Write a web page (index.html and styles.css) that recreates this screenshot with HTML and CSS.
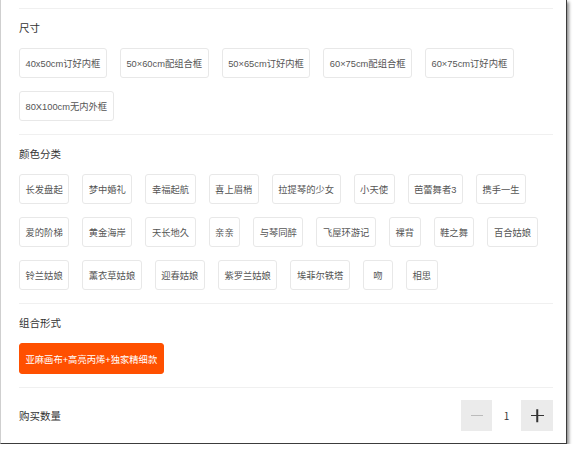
FILE: index.html
```html
<!DOCTYPE html>
<html lang="zh-CN">
<head>
  <meta charset="UTF-8" />
  <meta name="viewport" content="width=device-width, initial-scale=1" />
  <title>商品选项</title>
  <link rel="stylesheet" href="styles.css">
</head>
<body>
  <div class="window">
    <div class="sku-section">
      <div class="sku-title">尺寸</div>
      <div class="sku-options">
        <span class="sku-item">40x50cm订好内框</span>
        <span class="sku-item">50×60cm配组合框</span>
        <span class="sku-item">50×65cm订好内框</span>
        <span class="sku-item">60×75cm配组合框</span>
        <span class="sku-item">60×75cm订好内框</span>
        <span class="sku-item">80X100cm无内外框</span>
      </div>
    </div>

    <div class="sku-section">
      <div class="sku-title">颜色分类</div>
      <div class="sku-options">
        <span class="sku-item">长发盘起</span>
        <span class="sku-item">梦中婚礼</span>
        <span class="sku-item">幸福起航</span>
        <span class="sku-item">喜上眉梢</span>
        <span class="sku-item">拉提琴的少女</span>
        <span class="sku-item">小天使</span>
        <span class="sku-item">芭蕾舞者3</span>
        <span class="sku-item">携手一生</span>
        <span class="sku-item">爱的阶梯</span>
        <span class="sku-item">黄金海岸</span>
        <span class="sku-item">天长地久</span>
        <span class="sku-item">亲亲</span>
        <span class="sku-item">与琴同醉</span>
        <span class="sku-item">飞屋环游记</span>
        <span class="sku-item">裸背</span>
        <span class="sku-item">鞋之舞</span>
        <span class="sku-item">百合姑娘</span>
        <span class="sku-item">铃兰姑娘</span>
        <span class="sku-item">薰衣草姑娘</span>
        <span class="sku-item">迎春姑娘</span>
        <span class="sku-item">紫罗兰姑娘</span>
        <span class="sku-item">埃菲尔铁塔</span>
        <span class="sku-item">吻</span>
        <span class="sku-item">相思</span>
      </div>
    </div>

    <div class="sku-section">
      <div class="sku-title">组合形式</div>
      <div class="sku-options">
        <span class="sku-item active">亚麻画布+高亮丙烯+独家精细款</span>
      </div>
    </div>

    <div class="sku-section quantity-row">
      <div class="sku-title">购买数量</div>
      <div class="stepper">
        <span class="step-btn minus"></span>
        <span class="step-value">1</span>
        <span class="step-btn plus"></span>
      </div>
    </div>
  </div>
</body>
</html>
```

FILE: styles.css
```css
body {
  margin: 0;
  background: #fff;
  font-family: "Noto Sans CJK SC", "Noto Sans", sans-serif;
  color: #333;
}
.window {
  width: 567px;
  height: 444px;
  box-sizing: border-box;
  padding: 8px 13px 0 18px;
  border-left: 1px solid #cfcfcf;
  border-right: 1px solid #3c3c3c;
  border-bottom: 1px solid #3c3c3c;
  box-shadow: 2px 2px 3px rgba(0, 0, 0, 0.45);
  background: #fff;
}
.sku-section {
  border-top: 1px solid #f0f0f0;
  padding: 11px 0 13px;
}
.sku-title {
  font-size: 10.5px;
  line-height: 16px;
  color: #333;
  margin-bottom: 12px;
}
.sku-options {
  display: flex;
  flex-wrap: wrap;
  gap: 13px;
}
.sku-item {
  display: inline-flex;
  align-items: center;
  justify-content: center;
  min-width: 30px;
  height: 30px;
  padding: 0 5.5px;
  box-sizing: border-box;
  border: 1px solid #e8e8e8;
  border-radius: 3px;
  font-family: "Liberation Sans", "Noto Sans CJK SC", sans-serif;
  font-size: 9.3px;
  color: #555;
  background: #fff;
  white-space: nowrap;
}
.sku-item.active {
  height: 31px;
  background: #ff5000;
  border-color: #ff5000;
  color: #fff;
}
.quantity-row {
  display: flex;
  justify-content: space-between;
  align-items: center;
  padding: 12px 0;
}
.quantity-row .sku-title {
  margin-bottom: 0;
}
.stepper {
  display: flex;
  height: 31px;
  background: #ebebeb;
}
.step-btn {
  position: relative;
  width: 31px;
}
.step-btn.plus {
  width: 32px;
}
.step-btn::before,
.step-btn::after {
  content: "";
  position: absolute;
  left: 50%;
  top: 50%;
  width: 12px;
  height: 1px;
  margin: -0.5px 0 0 -6px;
  background: #bbb;
}
.step-btn.minus::after {
  display: none;
}
.step-btn.plus::before,
.step-btn.plus::after {
  background: #333;
  height: 1.5px;
  width: 13px;
  margin: -0.75px 0 0 -6.5px;
}
.step-btn.plus::after {
  transform: rotate(90deg);
}
.step-value {
  width: 29px;
  background: #fff;
  display: flex;
  align-items: center;
  justify-content: center;
  font-size: 10px;
  color: #333;
}
```
